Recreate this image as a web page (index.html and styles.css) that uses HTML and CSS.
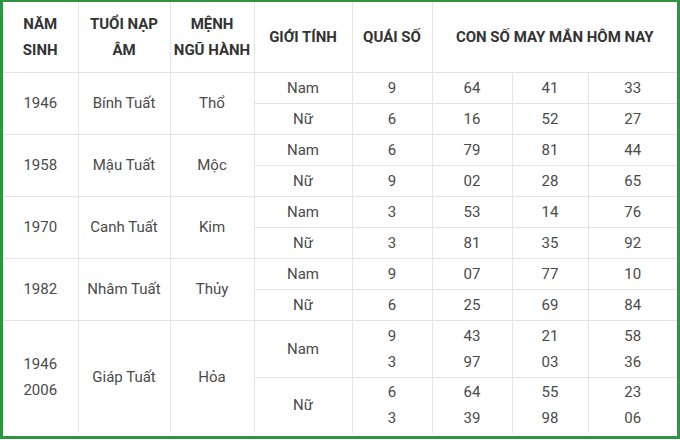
FILE: index.html
```html
<!DOCTYPE html>
<html lang="vi">
<head>
<meta charset="utf-8">
<link rel="stylesheet" href="styles.css">
</head>
<body>
<div class="frame">
<table class="tbl">
<colgroup>
<col class="c1"><col class="c2"><col class="c3"><col class="c4"><col class="c5"><col class="c6"><col class="c7"><col class="c8">
</colgroup>
<thead>
<tr class="head">
<th>NĂM<br>SINH</th>
<th>TUỔI NẠP<br>ÂM</th>
<th>MỆNH<br>NGŨ HÀNH</th>
<th>GIỚI TÍNH</th>
<th>QUÁI SỐ</th>
<th colspan="3">CON SỐ MAY MẮN HÔM NAY</th>
</tr>
</thead>
<tbody>
<tr class="r"><td rowspan="2">1946</td><td rowspan="2">Bính Tuất</td><td rowspan="2">Thổ</td><td>Nam</td><td>9</td><td>64</td><td>41</td><td>33</td></tr>
<tr class="r"><td>Nữ</td><td>6</td><td>16</td><td>52</td><td>27</td></tr>
<tr class="r"><td rowspan="2">1958</td><td rowspan="2">Mậu Tuất</td><td rowspan="2">Mộc</td><td>Nam</td><td>6</td><td>79</td><td>81</td><td>44</td></tr>
<tr class="r"><td>Nữ</td><td>9</td><td>02</td><td>28</td><td>65</td></tr>
<tr class="r"><td rowspan="2">1970</td><td rowspan="2">Canh Tuất</td><td rowspan="2">Kim</td><td>Nam</td><td>3</td><td>53</td><td>14</td><td>76</td></tr>
<tr class="r"><td>Nữ</td><td>3</td><td>81</td><td>35</td><td>92</td></tr>
<tr class="r"><td rowspan="2">1982</td><td rowspan="2">Nhâm Tuất</td><td rowspan="2">Thủy</td><td>Nam</td><td>9</td><td>07</td><td>77</td><td>10</td></tr>
<tr class="r"><td>Nữ</td><td>6</td><td>25</td><td>69</td><td>84</td></tr>
<tr class="rt"><td rowspan="2">1946<br>2006</td><td rowspan="2">Giáp Tuất</td><td rowspan="2">Hỏa</td><td>Nam</td><td>9<br>3</td><td>43<br>97</td><td>21<br>03</td><td>58<br>36</td></tr>
<tr class="rb"><td>Nữ</td><td>6<br>3</td><td>64<br>39</td><td>55<br>98</td><td>23<br>06</td></tr>
</tbody>
</table>
</div>
</body>
</html>
```
FILE: styles.css
```css
html, body {
  margin: 0;
  padding: 0;
  background: #ffffff;
}
.frame {
  width: 680px;
  height: 439px;
  box-sizing: border-box;
  border-left: 3px solid #2f9441;
  border-right: 3px solid #2f9441;
  border-top: 2px solid #2f9441;
  border-bottom: 3px solid #2f9441;
  overflow: hidden;
}
.tbl {
  width: 674px;
  table-layout: fixed;
  border-collapse: collapse;
  font-family: Roboto, "Liberation Sans", sans-serif;
  font-size: 15px;
  color: #4a4a4a;
}
.c1 { width: 75px; }
.c2 { width: 92px; }
.c3 { width: 84px; }
.c4 { width: 98px; }
.c5 { width: 80px; }
.c6 { width: 80px; }
.c7 { width: 76px; }
.c8 { width: 89px; }
.tbl th, .tbl td {
  border: 1px solid #e4e4e4;
  text-align: center;
  vertical-align: middle;
  padding: 0;
}
.tbl tr > :first-child { border-left: none; }
.tbl tr > :last-child { border-right: none; }
.tbl thead th { border-top: none; }
.head { height: 70px; }
.head th {
  font-weight: 700;
  color: #333333;
  line-height: 26px;
  font-size: 15px;
}
.r { height: 31px; }
.r td { line-height: 20px; }
.rt { height: 57px; }
.rb { height: 56px; }
.rt td, .rb td { line-height: 26px; }
.rb td { border-bottom: none; }
.rt td[rowspan] { border-bottom: none; }
```
